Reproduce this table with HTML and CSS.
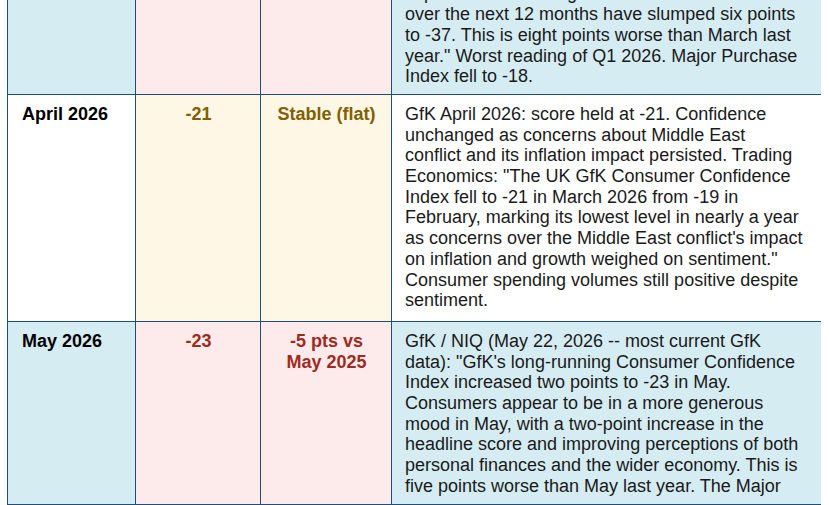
FILE: index.html
```html
<!DOCTYPE html>
<html lang="en">
<head>
<meta charset="utf-8">
<title>UK GfK Consumer Confidence</title>
<link rel="stylesheet" href="styles.css">
</head>
<body>
<div class="viewport">
  <table class="gfk">
    <colgroup>
      <col class="c-month">
      <col class="c-score">
      <col class="c-change">
      <col class="c-notes">
    </colgroup>
    <tbody>
      <tr class="row-alt row-first">
        <td class="month">March 2026</td>
        <td class="val neg">-21</td>
        <td class="val neg">-2 pts</td>
        <td class="notes">GfK March 2026: score fell two points to -21.<br>Neil Bellamy, GfK: "Our measure of<br>expectations for the general economic situation<br>over the next 12 months have slumped six points<br>to -37. This is eight points worse than March last<br>year." Worst reading of Q1 2026. Major Purchase<br>Index fell to -18.</td>
      </tr>
      <tr>
        <td class="month">April 2026</td>
        <td class="val flat">-21</td>
        <td class="val flat">Stable (flat)</td>
        <td class="notes">GfK April 2026: score held at -21. Confidence<br>unchanged as concerns about Middle East<br>conflict and its inflation impact persisted. Trading<br>Economics: "The UK GfK Consumer Confidence<br>Index fell to -21 in March 2026 from -19 in<br>February, marking its lowest level in nearly a year<br>as concerns over the Middle East conflict's impact<br>on inflation and growth weighed on sentiment."<br>Consumer spending volumes still positive despite<br>sentiment.</td>
      </tr>
      <tr class="row-alt">
        <td class="month">May 2026</td>
        <td class="val neg">-23</td>
        <td class="val neg">-5 pts vs<br>May 2025</td>
        <td class="notes">GfK / NIQ (May 22, 2026 -- most current GfK<br>data): "GfK's long-running Consumer Confidence<br>Index increased two points to -23 in May.<br>Consumers appear to be in a more generous<br>mood in May, with a two-point increase in the<br>headline score and improving perceptions of both<br>personal finances and the wider economy. This is<br>five points worse than May last year. The Major</td>
      </tr>
    </tbody>
  </table>
</div>
</body>
</html>
```

FILE: styles.css
```css
html, body {
  margin: 0;
  padding: 0;
  background: #ffffff;
}

body {
  font-family: "Liberation Sans", Arial, sans-serif;
  font-size: 18px;
  color: #1a1a1a;
}

.viewport {
  width: 814px;
  height: 505px;
  margin-left: 7px;
  box-sizing: border-box;
  border-bottom: 1px solid #1f4e79;
  overflow: hidden;
}

.gfk {
  width: 814px;
  table-layout: fixed;
  border-collapse: collapse;
  margin-top: -68px;
}

.c-month { width: 128px; }
.c-score { width: 125px; }
.c-change { width: 131px; }
.c-notes { width: 430px; }

.gfk td {
  border: 1px solid #1f4e79;
  padding: 9px 13px 10px 14px;
  vertical-align: top;
  line-height: 20.7px;
  background: #ffffff;
}

.gfk td.notes {
  padding-left: 13px;
  padding-right: 6px;
  white-space: nowrap;
}

.gfk .row-first td.notes {
  padding-bottom: 7px;
}

.row-alt td {
  background: #d5ecf3;
}

.month {
  font-weight: bold;
  color: #000000;
}

.val {
  font-weight: bold;
  text-align: center;
}

.row-alt td.neg,
td.neg {
  background: #fdebeb;
  color: #9d2b22;
}

td.flat {
  background: #fef7e6;
  color: #7f6000;
}
```
